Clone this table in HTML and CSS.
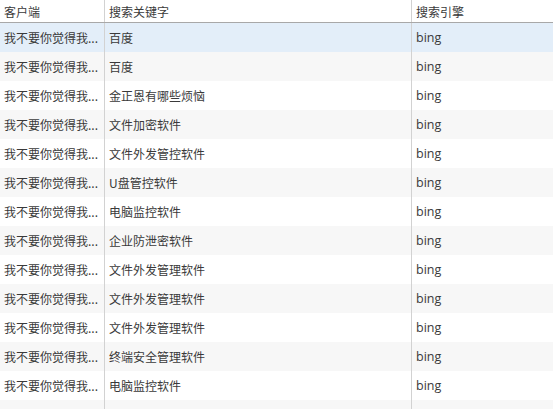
FILE: index.html
```html
<!DOCTYPE html>
<html>
<head>
<meta charset="utf-8">
<link rel="stylesheet" href="styles.css">
</head>
<body>
<div class="grid">
  <div class="row head"><div class="c c1">客户端</div><div class="c c2">搜索关键字</div><div class="c c3">搜索引擎</div></div>
  <div class="row sel"><div class="c c1">我不要你觉得我...</div><div class="c c2">百度</div><div class="c c3">bing</div></div>
  <div class="row alt"><div class="c c1">我不要你觉得我...</div><div class="c c2">百度</div><div class="c c3">bing</div></div>
  <div class="row"><div class="c c1">我不要你觉得我...</div><div class="c c2">金正恩有哪些烦恼</div><div class="c c3">bing</div></div>
  <div class="row alt"><div class="c c1">我不要你觉得我...</div><div class="c c2">文件加密软件</div><div class="c c3">bing</div></div>
  <div class="row"><div class="c c1">我不要你觉得我...</div><div class="c c2">文件外发管控软件</div><div class="c c3">bing</div></div>
  <div class="row alt"><div class="c c1">我不要你觉得我...</div><div class="c c2">U盘管控软件</div><div class="c c3">bing</div></div>
  <div class="row"><div class="c c1">我不要你觉得我...</div><div class="c c2">电脑监控软件</div><div class="c c3">bing</div></div>
  <div class="row alt"><div class="c c1">我不要你觉得我...</div><div class="c c2">企业防泄密软件</div><div class="c c3">bing</div></div>
  <div class="row"><div class="c c1">我不要你觉得我...</div><div class="c c2">文件外发管理软件</div><div class="c c3">bing</div></div>
  <div class="row alt"><div class="c c1">我不要你觉得我...</div><div class="c c2">文件外发管理软件</div><div class="c c3">bing</div></div>
  <div class="row"><div class="c c1">我不要你觉得我...</div><div class="c c2">文件外发管理软件</div><div class="c c3">bing</div></div>
  <div class="row alt"><div class="c c1">我不要你觉得我...</div><div class="c c2">终端安全管理软件</div><div class="c c3">bing</div></div>
  <div class="row"><div class="c c1">我不要你觉得我...</div><div class="c c2">电脑监控软件</div><div class="c c3">bing</div></div>
  <div class="row alt"><div class="c c1"></div><div class="c c2"></div><div class="c c3"></div></div>
</div>
</body>
</html>
```
FILE: styles.css
```css
html, body {
  margin: 0;
  padding: 0;
  background: #ffffff;
  overflow: hidden;
  height: 409px;
}
.grid {
  width: 553px;
  font-family: "Noto Sans CJK SC", "Microsoft YaHei", sans-serif;
  font-size: 12px;
  color: #3a3a3a;
}
.row {
  display: grid;
  grid-template-columns: 104px 307px 1fr;
  height: 29px;
  background: #ffffff;
}
.row.alt { background: #f7f7f7; }
.row.sel { background: #e3eef9; }
.row.head {
  height: 22px;
  border-bottom: 1px solid #a8a8a8;
  background: #ffffff;
}
.c {
  display: flex;
  align-items: center;
  white-space: nowrap;
  overflow: hidden;
}
.c1 { padding-left: 4px; }
.c2, .c3 {
  border-left: 1px solid #d2d2d2;
  padding-left: 4px;
}
.head .c { padding-bottom: 0; }
.c3 { font-family: "Open Sans", "Noto Sans", sans-serif; font-size: 12.5px; }
.head .c3 { font-family: "Noto Sans CJK SC", sans-serif; font-size: 12px; }
```
